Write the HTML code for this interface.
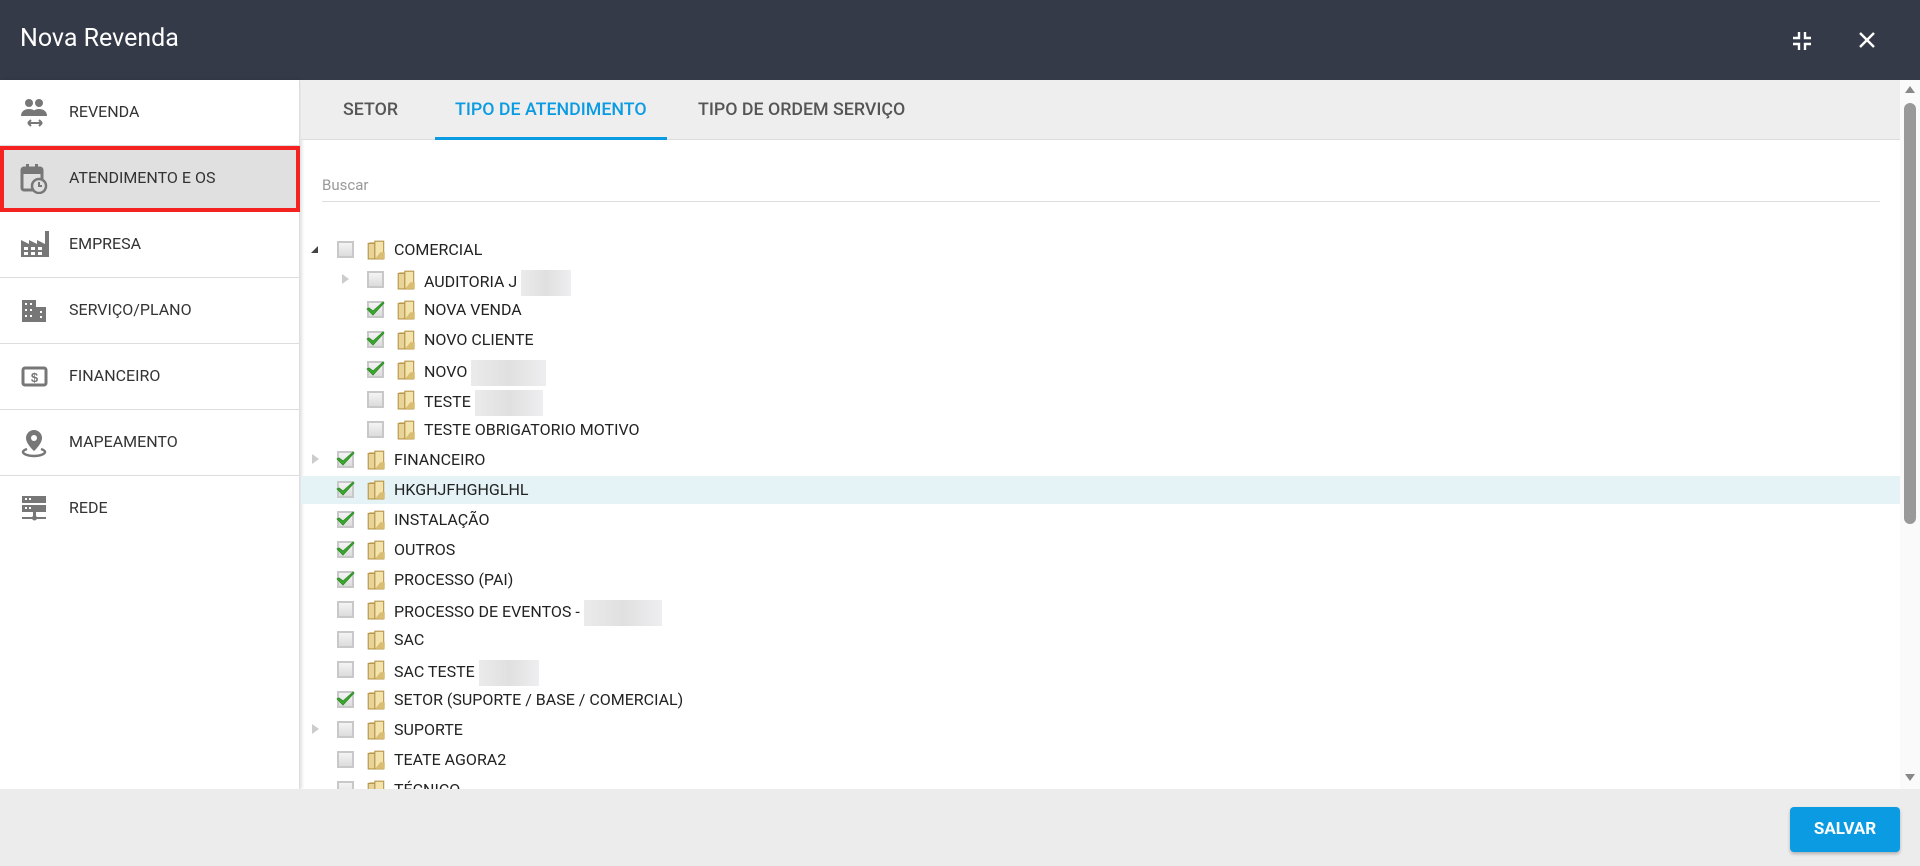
<!DOCTYPE html>
<html><head><meta charset="utf-8">
<style>
*{margin:0;padding:0;box-sizing:border-box}
body{width:1920px;height:866px;overflow:hidden;background:#fff;font-family:"Roboto","Liberation Sans",sans-serif;position:relative;color:#222}
.hdr{position:absolute;left:0;top:0;width:1920px;height:80px;background:#353a48}
.hdr .t{position:absolute;left:20px;top:24px;color:#fff;font-size:25px}
.side{position:absolute;left:0;top:80px;width:300px;height:709px;background:#fff;border-right:1px solid #ddd;box-shadow:2px 0 3px rgba(0,0,0,.12)}
.it{position:absolute;left:0;width:300px;height:66px;border-bottom:1px solid #ddd}
.it span{position:absolute;left:69px;top:22px;font-size:16px;color:#333}
.it svg{position:absolute;left:20px;top:18px}
.sel{background:#e0e0e0;border:4px solid #f52222}
.tabs{position:absolute;left:301px;top:80px;width:1599px;height:60px;background:#eee;border-bottom:1px solid #ddd}
.tab{position:absolute;top:20px;font-size:17.8px;font-weight:500;color:#555}
.tab.a{color:#0a9be3}
.ul{position:absolute;left:435px;top:137px;width:232px;height:3px;background:#0a9be3}
.buscar{position:absolute;left:322px;top:176px;font-size:15px;color:#999}
.line{position:absolute;left:322px;top:201px;width:1558px;height:1px;background:#ddd}
.row{position:absolute;height:30px;left:301px;width:1599px}
.row .tx{position:absolute;top:6px;font-size:16px;color:#222;white-space:nowrap}
.cb{position:absolute;top:7px;width:17px;height:17px;border:2px solid #c8c8c8;background:linear-gradient(#f4f4f4,#dcdcdc)}
.fd{position:absolute;top:5px;width:21px;height:21px}
.ex{position:absolute;top:10px;width:0;height:0;border-top:5px solid transparent;border-bottom:5px solid transparent;border-left:7px solid #ccc}
.bl{display:inline-block;height:26px;vertical-align:middle;margin-left:4px;background:linear-gradient(90deg,#ebebeb,#e0e0e0 50%,#eeeef0)}
.foot{position:absolute;left:0;top:789px;width:1920px;height:77px;background:#ececec}
.btn{position:absolute;left:1790px;top:807px;width:110px;height:45px;background:#0a9be3;border-radius:4px;color:#fff;font-weight:bold;font-size:17px;text-align:center;line-height:45px;box-shadow:0 2px 3px rgba(0,0,0,.25)}
.sb{position:absolute;left:1900px;top:80px;width:20px;height:709px;background:#fafafa}
</style></head><body>
<div class="hdr"><div class="t">Nova Revenda</div>
<svg style="position:absolute;left:1792px;top:31px" width="20" height="20" viewBox="0 0 20 20" fill="none" stroke="#fff" stroke-width="2.4"><path d="M7 1v6H1M13 1v6h6M7 19v-6H1M13 19v-6h6"/></svg>
<svg style="position:absolute;left:1858px;top:31px" width="18" height="18" viewBox="0 0 18 18" stroke="#fff" stroke-width="2.4"><path d="M2 2l14 14M16 2L2 16"/></svg>
</div>
<div class="side">
<div class="it" style="top:0"><svg width="30" height="32" viewBox="0 0 30 32" fill="#777"><circle cx="9" cy="5" r="4"/><circle cx="19" cy="5" r="4"/><path d="M1 18c0-5 4-7 8-7s8 2 8 7zM12 18c0-5 3-7 7-7s8 2 8 7z"/><path d="M8 25h14M8 25l3-3M8 25l3 3M22 25l-3-3M22 25l-3 3" stroke="#777" stroke-width="2" fill="none"/></svg><span>REVENDA</span></div>
<div class="it sel" style="top:66px"><svg style="left:16px;top:14px" width="28" height="30" viewBox="0 0 28 30"><rect x="2" y="4" width="20" height="22" rx="2" fill="none" stroke="#777" stroke-width="3"/><rect x="2" y="4" width="20" height="6" fill="#777"/><rect x="6" y="0" width="3" height="6" fill="#777"/><rect x="15" y="0" width="3" height="6" fill="#777"/><circle cx="19" cy="22" r="7" fill="#e0e0e0" stroke="#777" stroke-width="2.5"/><path d="M19 18v4h3" stroke="#777" stroke-width="2" fill="none"/></svg><span style="left:65px;top:18px">ATENDIMENTO E OS</span></div>
<div class="it" style="top:132px"><svg width="30" height="28" viewBox="0 0 30 28" fill="#777"><path d="M1 10l8 4V10l8 4V10l8 4V1h4v26H1z"/><g fill="#fff"><rect x="4" y="17" width="4" height="3"/><rect x="11" y="17" width="4" height="3"/><rect x="18" y="17" width="4" height="3"/><rect x="4" y="22" width="4" height="3"/><rect x="11" y="22" width="4" height="3"/><rect x="18" y="22" width="4" height="3"/></g></svg><span>EMPRESA</span></div>
<div class="it" style="top:198px"><svg width="28" height="28" viewBox="0 0 28 28" fill="#777"><rect x="2" y="4" width="14" height="22"/><rect x="16" y="11" width="10" height="15"/><g fill="#fff"><rect x="5" y="7" width="2" height="2"/><rect x="10" y="7" width="2" height="2"/><rect x="5" y="13" width="2" height="2"/><rect x="10" y="13" width="2" height="2"/><rect x="5" y="19" width="2" height="2"/><rect x="10" y="19" width="2" height="2"/><rect x="20" y="15" width="2" height="2"/><rect x="20" y="20" width="2" height="2"/></g></svg><span>SERVIÇO/PLANO</span></div>
<div class="it" style="top:264px"><svg width="28" height="28" viewBox="0 0 28 28"><rect x="3" y="6" width="23" height="17" rx="2" fill="none" stroke="#777" stroke-width="3"/><text x="14.5" y="20" font-size="13" font-weight="bold" text-anchor="middle" fill="#777" font-family="Liberation Sans">$</text></svg><span>FINANCEIRO</span></div>
<div class="it" style="top:330px"><svg width="28" height="30" viewBox="0 0 28 30"><path d="M14 2a8 8 0 0 0-8 8c0 6 8 13 8 13s8-7 8-13a8 8 0 0 0-8-8z" fill="#777"/><circle cx="14" cy="10" r="3" fill="#fff"/><path d="M7 21c-3 1-4 2-4 3 0 2 5 4 11 4s11-2 11-4c0-1-1-2-4-3" fill="none" stroke="#777" stroke-width="2.5"/></svg><span>MAPEAMENTO</span></div>
<div class="it" style="top:396px;border:none"><svg width="28" height="28" viewBox="0 0 28 28" fill="#777"><rect x="2" y="2" width="24" height="7"/><rect x="2" y="11" width="24" height="7"/><rect x="13" y="18" width="3" height="5"/><rect x="2" y="23" width="24" height="2"/><circle cx="14.5" cy="24" r="2.5"/><g fill="#fff"><rect x="5" y="4" width="2" height="2"/><rect x="9" y="4" width="2" height="2"/><rect x="5" y="13" width="2" height="2"/><rect x="9" y="13" width="2" height="2"/></g></svg><span>REDE</span></div>
</div>
<div class="tabs"></div>
<div class="tab" style="left:343px;top:99px">SETOR</div>
<div class="tab a" style="left:455px;top:99px">TIPO DE ATENDIMENTO</div>
<div class="tab" style="left:698px;top:99px">TIPO DE ORDEM SERVIÇO</div>
<div class="ul"></div>
<div class="buscar">Buscar</div>
<div class="line"></div>
<svg width="0" height="0" style="position:absolute"><defs>
<symbol id="f" viewBox="0 0 19 19"><path d="M3 3h5l1 1h4v14H3z" fill="#c9a95c"/><path d="M2 4h6v14H2z" fill="#e8d398" stroke="#b8964a" stroke-width="1"/><path d="M8 2h8v16H8z" fill="#f3e3ad" stroke="#b8964a" stroke-width="1"/><path d="M9 17l4-5h4v6H9z" fill="#d9bd72"/></symbol>
<symbol id="c" viewBox="0 0 19 19"><path d="M1 9l6 6L18 3l-1-1-10 9-4-3z" fill="#3aa72f" stroke="#2a8a22" stroke-width=".8"/></symbol>
</defs></svg>
<div style="position:absolute;left:301px;top:476px;width:1599px;height:28px;background:#e5f3f7"></div>
<div id="tree"></div>
<script>
var rows=[[0,'COMERCIAL',0,'down'],[1,'AUDITORIA J',0,'r',[50]],[1,'NOVA VENDA',1],[1,'NOVO CLIENTE',1],[1,'NOVO',1,0,[75]],[1,'TESTE',0,0,[68]],[1,'TESTE OBRIGATORIO MOTIVO',0],[0,'FINANCEIRO',1,'r'],[0,'HKGHJFHGHGLHL',1],[0,'INSTALAÇÃO',1],[0,'OUTROS',1],[0,'PROCESSO (PAI)',1],[0,'PROCESSO DE EVENTOS -',0,0,[78]],[0,'SAC',0],[0,'SAC TESTE',0,0,[60]],[0,'SETOR (SUPORTE / BASE / COMERCIAL)',1],[0,'SUPORTE',0,'r'],[0,'TEATE AGORA2',0],[0,'TÉCNICO',0]];
var h='';
rows.forEach(function(r,i){var top=234+30*i,o=r[0]*30;
if(top>789)return;
h+='<div class="row" style="top:'+top+'px;'+(top+30>789?'height:'+(789-top)+'px;overflow:hidden':'')+'">';
if(r[3]=='r')h+='<div class="ex" style="left:'+(11+o)+'px"></div>';
if(r[3]=='down')h+='<div style="position:absolute;left:10px;top:12px;width:0;height:0;border-left:7px solid transparent;border-bottom:7px solid #444"></div>';
h+='<div class="cb" style="left:'+(36+o)+'px"></div>';
if(r[2])h+='<svg style="position:absolute;left:'+(35+o)+'px;top:6px" width="19" height="19"><use href="#c"/></svg>';
h+='<svg class="fd" style="left:'+(65+o)+'px"><use href="#f"/></svg>';
h+='<div class="tx" style="left:'+(93+o)+'px">'+r[1]+(r[4]?'<span class="bl" style="width:'+r[4][0]+'px"></span>':'')+'</div></div>';});
document.getElementById('tree').innerHTML=h;
</script>
<div class="sb"><div style="position:absolute;left:5px;top:6px;border-left:5px solid transparent;border-right:5px solid transparent;border-bottom:7px solid #888"></div><div style="position:absolute;left:4px;top:23px;width:12px;height:421px;background:#999;border-radius:6px"></div><div style="position:absolute;left:5px;top:694px;border-left:5px solid transparent;border-right:5px solid transparent;border-top:7px solid #888"></div></div>
<div class="foot"></div>
<div class="btn">SALVAR</div>
</body></html>
